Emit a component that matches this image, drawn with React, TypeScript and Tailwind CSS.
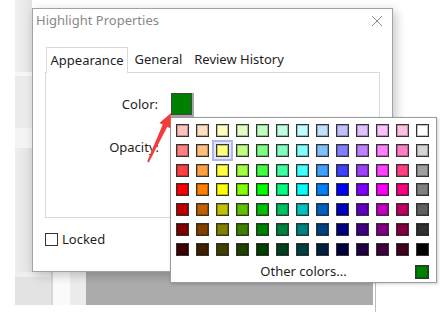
const PALETTE = [
  ["#ffc0c0", "#ffe0c0", "#ffffc0", "#e0ffc0", "#c0ffc0", "#c0ffe0", "#c0ffff", "#c0e0ff", "#c0c0ff", "#e0c0ff", "#ffc0ff", "#ffc0e0", "#ffffff"],
  ["#ff8080", "#ffc080", "#ffff80", "#c0ff80", "#80ff80", "#80ffc0", "#80ffff", "#80c0ff", "#8080ff", "#c080ff", "#ff80ff", "#ff80c0", "#d4d4d4"],
  ["#ff4040", "#ffa040", "#ffff40", "#a0ff40", "#40ff40", "#40ffa0", "#40ffff", "#40a0ff", "#4040ff", "#a040ff", "#ff40ff", "#ff4080", "#a0a0a0"],
  ["#ff0000", "#ff8000", "#ffff00", "#80ff00", "#00ff00", "#00ff80", "#00ffff", "#0080ff", "#0000ff", "#8000ff", "#ff00ff", "#ff0080", "#808080"],
  ["#c00000", "#c06000", "#c0c000", "#60c000", "#00c000", "#00c060", "#00c0c0", "#0060c0", "#0000c0", "#6000c0", "#c000c0", "#c00060", "#606060"],
  ["#800000", "#804000", "#808000", "#408000", "#008000", "#008040", "#008080", "#004080", "#000080", "#400080", "#800080", "#800040", "#303030"],
  ["#400000", "#402000", "#404000", "#204000", "#004000", "#004020", "#004040", "#002040", "#000040", "#200040", "#400040", "#400020", "#000000"],
];

const FONT = "font-['Noto_Sans','Open_Sans',sans-serif]";

function Swatch({ color, selected }: { color: string; selected?: boolean }) {
  return (
    <div
      className={
        selected
          ? "h-[13px] w-[13px] border border-[#333] shadow-[inset_0_0_0_1px_rgba(0,0,0,0.25),0_0_0_2px_#e3e6fc,0_0_0_4px_#aeb5f3]"
          : "h-[13px] w-[13px] border border-[#333] shadow-[inset_0_0_0_1px_rgba(0,0,0,0.25)]"
      }
      style={{ backgroundColor: color }}
    />
  );
}

function ColorPopup() {
  return (
    <div className="absolute left-[170px] top-[117px] flex h-[166px] w-[267px] flex-col border border-[#9c9c9c] bg-white px-[5px] pt-[6px] shadow-[1px_1px_3px_rgba(0,0,0,0.2)]">
      <div className="grid grid-cols-[repeat(13,13px)] gap-x-[7px] gap-y-[6.8px]">
        {PALETTE.flatMap((row, r) =>
          row.map((c, i) => <Swatch key={`${r}-${i}`} color={c} selected={r === 1 && i === 2} />),
        )}
      </div>
      <div className="mt-[6px] grid h-[20px] grid-cols-[1fr_auto_1fr] items-center">
        <span />
        <span className={`${FONT} text-[13px] text-[#1e1e1e]`}>Other colors...</span>
        <div className="mr-[2px] h-[14px] w-[14px] justify-self-end border border-[#333] bg-[#008000] shadow-[inset_0_0_0_1px_rgba(0,0,0,0.25)]" />
      </div>
    </div>
  );
}

function Arrow() {
  return (
    <svg
      className="absolute left-[140px] top-[105px]"
      width="40"
      height="65"
      viewBox="140 105 40 65"
    >
      <polygon
        points="171,113 170.4,128.5 167.3,126.8 148.8,162.4 147.2,161.6 162.7,124.6 159.4,123"
        fill="#f23c3c"
      />
    </svg>
  );
}

function Dialog() {
  return (
    <div
      className={`absolute left-[32px] top-[8px] flex h-[264px] w-[361px] flex-col border border-[#a3a3a3] bg-white shadow-[3px_3px_10px_rgba(0,0,0,0.22)] ${FONT}`}
    >
      <div className="flex h-[24px] items-center justify-between pl-[3px] pr-[9px]">
        <span className="text-[13px] text-[#888]">Highlight Properties</span>
        <svg width="12" height="12" viewBox="0 0 12 12">
          <path d="M1 1 L11 11 M11 1 L1 11" stroke="#8a8a8a" strokeWidth="1" />
        </svg>
      </div>
      <div className="mt-[14px] flex items-end pl-[13px] text-[13px] text-[#1e1e1e]">
        <div className="relative z-10 -mb-px flex h-[26px] w-[82px] items-center justify-center border border-b-0 border-[#d9d9d9] bg-white">
          Appearance
        </div>
        <div className="flex h-[24px] w-[61px] items-center justify-center">General</div>
        <div className="flex h-[24px] w-[100px] items-center justify-center">Review History</div>
      </div>
      <div className="mx-[12px] flex h-[146px] flex-col border border-[#d9d9d9] pt-[20px] text-[13px] text-[#1e1e1e]">
        <div className="flex h-[24px] items-center">
          <span className="w-[112px] text-right">Color:</span>
          <div className="ml-[13px] h-[24px] w-[23px] border-r-2 border-b-2 border-[#a8a8a8] p-0">
            <div className="h-full w-full border border-[#444] bg-[#008000]" />
          </div>
        </div>
        <div className="mt-[19px] flex h-[24px] items-center">
          <span className="w-[113px] text-right">Opacity:</span>
        </div>
      </div>
      <div className="mt-[12px] flex items-center pl-[12px] text-[13px] text-[#1e1e1e]">
        <div className="h-[13px] w-[13px] border border-[#333]" />
        <span className="ml-[4px]">Locked</span>
      </div>
    </div>
  );
}

function Desktop() {
  return (
    <div className="flex h-[312px] w-[440px] flex-col bg-white">
      <div className="flex h-[272px]">
        <div className="w-[15px]" />
        <div className="flex w-[17px] flex-col">
          <div className="h-[72px] bg-gradient-to-r from-[#f1f1f1] to-[#e3e3e3]" />
          <div className="h-[4px] bg-[#f7f7f7]" />
          <div className="h-[52px] bg-[#ececec]" />
          <div className="h-[20px] bg-[#f4f4f4]" />
          <div className="flex-1 bg-gradient-to-r from-[#eeeeee] to-[#e2e2e2]" />
        </div>
        <div className="flex-1" />
      </div>
      <div className="flex h-[33px]">
        <div className="w-[15px]" />
        <div className="flex w-[36px] flex-col bg-[#e3e3e3]">
          <div className="h-[5px] bg-[#efefef]" />
        </div>
        <div className="w-[2px] bg-[#d6d6d6]" />
        <div className="w-[17px] bg-[#fafafa]" />
        <div className="w-[16px] bg-[#ececec]" />
        <div className="w-[287px] bg-[#ababab]" />
        <div className="w-[2px] bg-white" />
        <div className="w-px bg-[#bdbdbd]" />
        <div className="flex-1" />
      </div>
      <div className="flex flex-1">
        <div className="w-[375px]" />
        <div className="w-px bg-[#bdbdbd]" />
      </div>
    </div>
  );
}

export default function App() {
  return (
    <div className="relative h-[312px] w-[440px] overflow-hidden bg-white">
      <Desktop />
      <Dialog />
      <ColorPopup />
      <Arrow />
    </div>
  );
}
